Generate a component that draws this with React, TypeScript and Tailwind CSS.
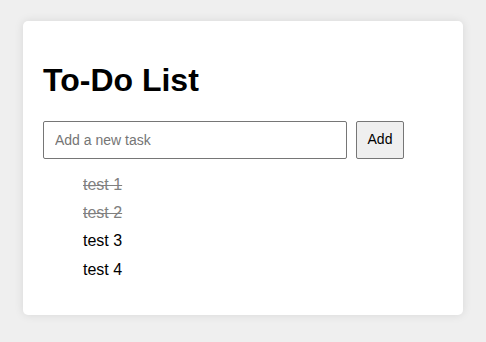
import React from "react";

const tasks = [
  { text: "test 1", done: true },
  { text: "test 2", done: true },
  { text: "test 3", done: false },
  { text: "test 4", done: false },
];

export default function App() {
  return (
    <div
      className="min-h-[342px] w-full bg-[#efefef] pt-[21px]"
      style={{ fontFamily: '"Liberation Sans", Arial, sans-serif' }}
    >
      <div className="mx-auto w-[440px] rounded-[5px] bg-white p-[20px] shadow-[0_0_10px_rgba(0,0,0,0.1)]">
        <h1 className="my-[21.44px] text-[32px] font-bold leading-[36.8px] text-black">To-Do List</h1>
        <div className="flex items-center">
          <input
            type="text"
            placeholder="Add a new task"
            className="h-[38px] w-[304px] rounded-[2px] border border-[#767676] bg-white px-[11px] text-[14px] text-black outline-none placeholder:text-[#757575]"
          />
          <button className="ml-[9px] h-[38px] w-[48px] rounded-[2px] border border-[#767676] bg-[#efefef] text-[14px] text-black">
            Add
          </button>
        </div>
        <ul className="mt-[12px] mb-[11px] list-none pl-[40px]">
          {tasks.map((t) => (
            <li
              key={t.text}
              className={
                t.done
                  ? "py-[5px] text-[16px] leading-[18.4px] text-[#808080] line-through"
                  : "py-[5px] text-[16px] leading-[18.4px] text-black"
              }
            >
              {t.text}
            </li>
          ))}
        </ul>
      </div>
    </div>
  );
}
